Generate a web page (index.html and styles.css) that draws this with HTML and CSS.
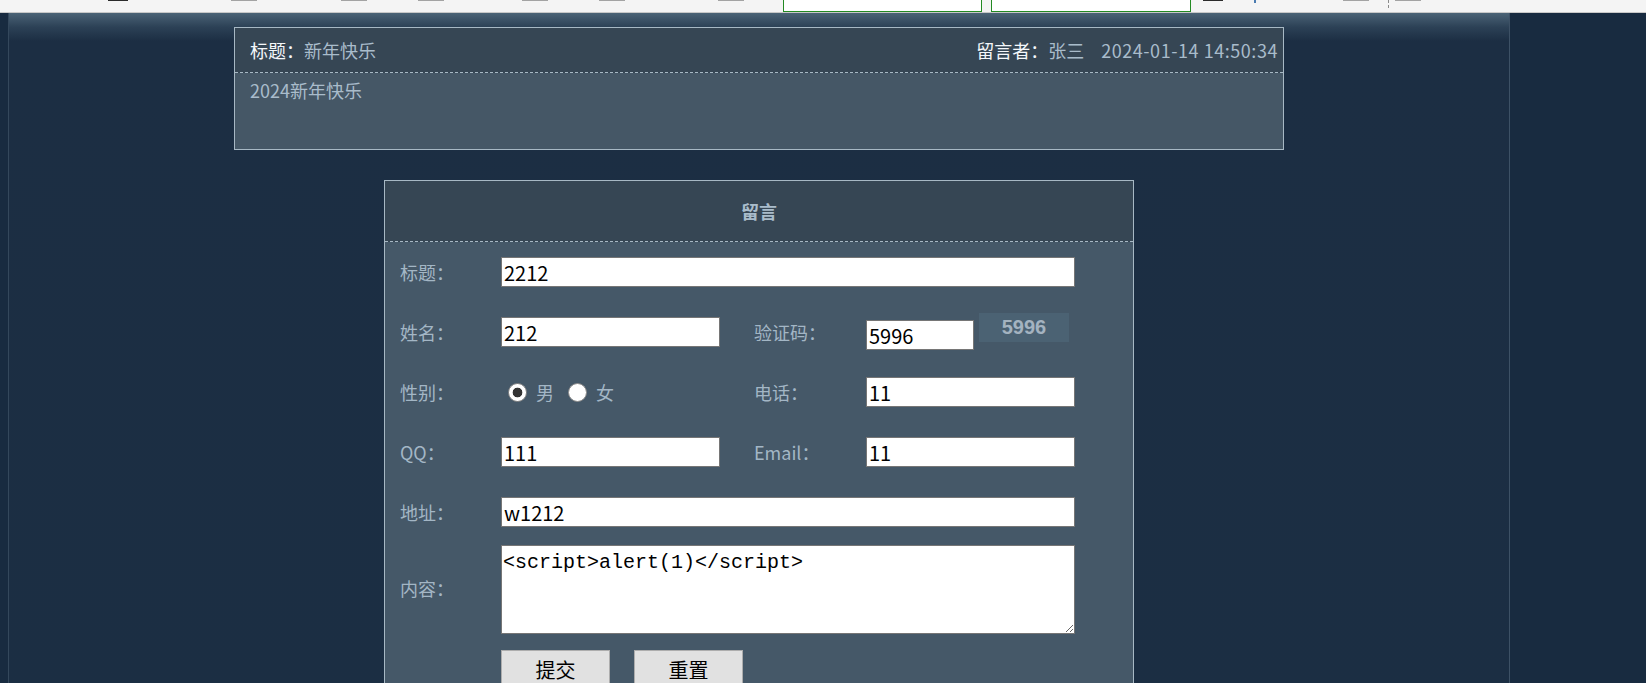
FILE: index.html
```html
<!DOCTYPE html>
<html lang="zh-CN">
<head>
<meta charset="utf-8">
<title>留言板</title>
<link rel="stylesheet" href="styles.css">
</head>
<body>
<div class="topbar">
  <span class="mk dark m1"></span>
  <span class="mk gray m2"></span>
  <span class="mk gray m3"></span>
  <span class="mk gray m4"></span>
  <span class="mk gray m5"></span>
  <span class="mk gray m6"></span>
  <span class="mk gray m7"></span>
  <span class="tbox m8"></span>
  <span class="tbox m9"></span>
  <span class="mk dark m10"></span>
  <span class="mk tiny m11"></span>
  <span class="mk gray m12"></span>
  <span class="vdash m13"></span>
  <span class="mk gray m14"></span>
</div>
<div class="page">
  <div class="msg">
    <div class="msg-head">
      <div class="msg-title"><span class="k">标题：</span><span class="v">新年快乐</span></div>
      <div class="msg-meta"><span class="k">留言者：</span><span class="v">张三</span><span class="v date">2024-01-14 14:50:34</span></div>
    </div>
    <div class="msg-body">2024新年快乐</div>
  </div>

  <form class="post">
    <div class="post-head">留言</div>
    <div class="grid">
      <label class="lbl">标题：</label>
      <div class="cell span3"><input class="inp w-wide" type="text" value="2212"></div>

      <label class="lbl">姓名：</label>
      <div class="cell"><input class="inp w-mid" type="text" value="212"></div>
      <label class="lbl">验证码：</label>
      <div class="cell captcha"><input class="inp w-code" type="text" value="5996"><div class="code-img">5996</div></div>

      <label class="lbl">性别：</label>
      <div class="cell radios">
        <input class="rad" type="radio" name="sex" checked><span class="rtxt">男</span>
        <input class="rad rad2" type="radio" name="sex"><span class="rtxt">女</span>
      </div>
      <label class="lbl">电话：</label>
      <div class="cell"><input class="inp w-right" type="text" value="11"></div>

      <label class="lbl">QQ：</label>
      <div class="cell"><input class="inp w-mid" type="text" value="111"></div>
      <label class="lbl">Email：</label>
      <div class="cell"><input class="inp w-right" type="text" value="11"></div>

      <label class="lbl">地址：</label>
      <div class="cell span3"><input class="inp w-wide" type="text" value="w1212"></div>

      <label class="lbl">内容：</label>
      <div class="cell span3 ta-cell"><textarea class="ta">&lt;script&gt;alert(1)&lt;/script&gt;</textarea></div>

      <div class="lbl"></div>
      <div class="cell span3 btns">
        <button class="btn" type="button">提交</button>
        <button class="btn" type="reset">重置</button>
      </div>
    </div>
  </form>
</div>
</body>
</html>
```

FILE: styles.css
```css
* { box-sizing: border-box; }
html, body { margin: 0; padding: 0; }
body {
  background: #182b40;
  font-family: "Noto Sans CJK SC", "Noto Sans", sans-serif;
  font-size: 18px;
  overflow: hidden;
}

/* top strip */
.topbar {
  height: 13px;
  background: #f4f4f4;
  border-bottom: 1px solid #c8c8c8;
  display: flex;
  align-items: flex-start;
}
.mk { height: 1px; display: block; }
.mk.dark { background: #2b2b2b; width: 20px; }
.mk.gray { background: #a3a3a3; width: 26px; }
.mk.tiny { background: #4a7bb0; width: 2px; height: 3px; }
.tbox {
  display: block;
  height: 12px;
  background: #fff;
  border: 1px solid #238a23;
  border-top: none;
}
.vdash { display: block; width: 1px; height: 8px; border-left: 1px dashed #8a8a8a; }
.m1 { margin-left: 108px; }
.m2 { margin-left: 103px; }
.m3 { margin-left: 84px; }
.m4 { margin-left: 51px; }
.m5 { margin-left: 78px; }
.m6 { margin-left: 51px; }
.m7 { margin-left: 93px; }
.m8 { margin-left: 39px; width: 199px; }
.m9 { margin-left: 9px; width: 200px; }
.m10 { margin-left: 12px; }
.m11 { margin-left: 31px; }
.m12 { margin-left: 87px; }
.m13 { margin-left: 19px; }
.m14 { margin-left: 6px; }

/* page column */
.page {
  width: 1502px;
  margin-left: 8px;
  min-height: 700px;
  border-left: 1px solid #34485c;
  border-right: 1px solid #3d5165;
  background: linear-gradient(#4b6376 0, #2c4156 14px, #1c2e43 28px, #1b2e43 100%);
  padding: 14px 0 40px;
}

/* posted message */
.msg {
  width: 1050px;
  margin: 0 auto;
  border: 1px solid #a7b8c4;
  background: #455766;
}
.msg-head {
  height: 45px;
  background: #364654;
  border-bottom: 1px dashed #a7b8c4;
  display: flex;
  align-items: center;
  justify-content: space-between;
  padding: 0 5px 0 15px;
  line-height: 24px;
}
.k { color: #f4f7fa; font-weight: normal; }
.v { color: #a9bccb; }
.date { margin-left: 17px; letter-spacing: 0.55px; }
.msg-body {
  height: 76px;
  padding: 5px 15px 0;
  line-height: 24px;
  color: #a9bccb;
}

/* post form */
.post {
  width: 750px;
  margin: 30px auto 0;
  border: 1px solid #a7b8c4;
  background: #455868;
}
.post-head {
  height: 61px;
  background: #364654;
  border-bottom: 1px dashed #a7b8c4;
  display: flex;
  align-items: center;
  justify-content: center;
  color: #a9bccb;
  font-weight: bold;
}
.grid {
  display: grid;
  grid-template-columns: 101px 253px 112px 1fr;
  grid-auto-rows: minmax(60px, auto);
  padding-left: 15px;
}
.lbl {
  color: #a3b6c5;
  display: flex;
  align-items: center;
  white-space: nowrap;
}
.cell { display: flex; align-items: center; }
.span3 { grid-column: span 3; }

.inp {
  height: 30px;
  border: 1px solid #767676;
  background: #fff;
  color: #000;
  font-family: "Noto Sans CJK SC", sans-serif;
  font-size: 20px;
  padding: 0 2px;
  margin: 0;
  outline: none;
}
.w-wide { width: 574px; }
.w-mid { width: 219px; }
.w-right { width: 209px; }
.w-code { width: 108px; margin-top: 6px; }
.captcha { gap: 5px; }
.code-img {
  width: 90px;
  height: 29px;
  margin-bottom: 9px;
  background: #4b6273;
  color: #a4b3c0;
  font-family: "Liberation Sans", sans-serif;
  font-size: 20px;
  font-weight: bold;
  display: flex;
  align-items: center;
  justify-content: center;
}

.radios { padding-left: 7px; }
.rad {
  appearance: none;
  -webkit-appearance: none;
  width: 19px;
  height: 19px;
  margin: 0 9px 0 0;
  border-radius: 50%;
  border: 1px solid #8a8a8a;
  background: #fff;
}
.rad:checked {
  background: radial-gradient(circle, #333 0 4.5px, #fff 5.2px);
}
.rad2 { margin-left: 14px; }
.rtxt { color: #a3b6c5; line-height: 24px; }

.ta-cell { align-items: flex-start; padding-top: 3px; }
.ta {
  display: block;
  width: 574px;
  height: 89px;
  margin: 0;
  border: 1px solid #767676;
  background: #fff;
  color: #000;
  font-family: "Liberation Mono", "Noto Sans CJK SC", monospace;
  font-size: 20px;
  line-height: 30px;
  padding: 2px 1px;
  resize: both;
  outline: none;
}
.btns { align-items: flex-start; padding-top: 16px; gap: 24px; }
.btn {
  width: 109px;
  height: 38px;
  background: #e1e1e1;
  border: 1px solid #adadad;
  font-family: "Noto Sans CJK SC", sans-serif;
  font-size: 20px;
  color: #000;
  padding: 0;
}
```
